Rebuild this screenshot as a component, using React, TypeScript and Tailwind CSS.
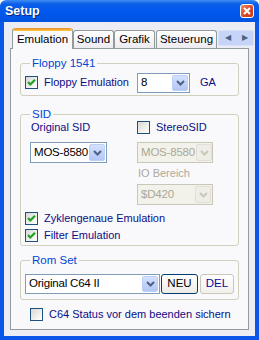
const font = "font-['Liberation_Sans',Arial,sans-serif]";

const Check = ({ checked }: { checked?: boolean }) => (
  <span className="w-[13px] h-[13px] shrink-0 border border-[#1c5180] bg-[linear-gradient(135deg,#d8d8d4_0%,#f4f4f2_70%,#ffffff_100%)] flex items-center justify-center">
    {checked && (
      <svg width="11" height="11" viewBox="0 0 11 11">
        <polyline points="2,5 4.3,7.5 9,2.8" stroke="#21a121" strokeWidth="2.2" fill="none" />
      </svg>
    )}
  </span>
);

const Chevron = ({ color }: { color: string }) => (
  <svg width="9" height="6" viewBox="0 0 9 6">
    <polyline points="1,1 4.5,4.5 8,1" stroke={color} strokeWidth="2" fill="none" />
  </svg>
);

const Combo = ({ value, className, disabled }: { value: string; className: string; disabled?: boolean }) => (
  <div
    className={`${className} flex shrink-0 border ${
      disabled ? "border-[#c9c7ba] bg-[#f2f1ea] text-[#aca899]" : "border-[#7f9db9] bg-white text-black"
    }`}
  >
    <span className="flex-1 flex items-center pl-[3px] text-[11.5px] leading-none whitespace-nowrap tracking-[-0.2px]">{value}</span>
    <span
      className={`w-[16px] m-[1px] rounded-[2px] flex items-center justify-center shrink-0 ${
        disabled ? "bg-[#eeede6] border border-[#e2e0d6]" : "bg-[linear-gradient(180deg,#d4e0fd,#b2c6f5)] border border-[#bccff8]"
      }`}
    >
      <Chevron color={disabled ? "#c9c7ba" : "#4d6185"} />
    </span>
  </div>
);

const Group = ({ title, className, children }: { title: string; className: string; children: React.ReactNode }) => (
  <fieldset className={`border border-[#d0d0bf] rounded-[3px] px-[4px] ${className}`}>
    <legend className="ml-[5px] px-[2px] text-[11.5px] leading-[13px] text-[#0046d5]">{title}</legend>
    {children}
  </fieldset>
);

const Tab = ({ label, w, active }: { label: string; w: string; active?: boolean }) =>
  active ? (
    <div className={`${w} h-[21px] -mb-[1px] relative z-10 shrink-0 rounded-t-[3px] border-x border-[#919b9c] bg-[#f9f9fc] flex flex-col`}>
      <div className="h-[3px] rounded-t-[3px] bg-[linear-gradient(180deg,#e68b2c,#ffc73c)]" />
      <div className="flex-1 flex items-center justify-center text-[11.5px] text-black pb-[1px]">{label}</div>
    </div>
  ) : (
    <div className={`${w} h-[18px] shrink-0 rounded-t-[3px] border border-b-0 border-[#919b9c] bg-[linear-gradient(180deg,#ffffff,#ecebf0)] flex items-center justify-center text-[11.5px] text-black`}>
      {label}
    </div>
  );

export default function App() {
  return (
    <div className={`w-[259px] h-[340px] flex flex-col overflow-hidden ${font} text-[11px] text-[#0c0c84]`}>
      <div className="h-[22px] shrink-0 flex items-center pl-[5px] pr-[5px] bg-[linear-gradient(180deg,#3f8cf3_0%,#0a5fe8_18%,#0058ee_55%,#0052e0_100%)] rounded-t-[6px]">
        <span className="text-white font-bold text-[12.5px] [text-shadow:1px_1px_#0a2a80]">Setup</span>
        <div className="ml-auto w-[14px] h-[14px] rounded-[3px] border border-white bg-[linear-gradient(135deg,#f08a6a,#d9461f_55%,#c23b16)] flex items-center justify-center">
          <svg width="8" height="8" viewBox="0 0 8 8">
            <path d="M1 1 L7 7 M7 1 L1 7" stroke="white" strokeWidth="2" />
          </svg>
        </div>
      </div>

      <div className="flex-1 flex flex-col bg-[#ececf5] border-x-4 border-b-4 border-[#0a56e8] px-[6px] pt-[6px] pb-[6px]">
        <div className="h-[20px] flex items-end pl-[2px]">
          <Tab label="Emulation" w="w-[61px]" active />
          <Tab label="Sound" w="w-[41px]" />
          <Tab label="Grafik" w="w-[41px]" />
          <Tab label="Steuerung" w="w-[61px] ml-[1px]" />
          <div className="self-start mt-[2px] ml-[1px] shrink-0 w-[36px] h-[16px] flex rounded-[2px] bg-[#c6d5f7] border border-[#d7e2fa]">
            <div className="flex-1 flex items-center justify-center text-[#4d6185] text-[8px]">◀</div>
            <div className="flex-1 flex items-center justify-center text-[#4d6185] text-[8px]">▶</div>
          </div>
        </div>

        <div className="flex-1 flex flex-col border border-[#919b9c] bg-[#f9f9fc] px-[9px] pt-[8px]">
          <Group title="Floppy 1541" className="pt-[2px] pb-[2px]">
            <div className="flex items-center h-[21px]">
              <div className="w-[112px] flex items-center gap-[6px]">
                <Check checked />
                <span className="whitespace-nowrap">Floppy Emulation</span>
              </div>
              <Combo value="8" className="w-[53px] h-[20px]" />
              <span className="ml-[10px]">GA</span>
            </div>
          </Group>

          <Group title="SID" className="mt-[12px] pb-[3px]">
            <div className="flex">
              <div className="w-[112px] pl-[5px] flex flex-col">
                <span className="leading-[13px] pl-[1px]">Original SID</span>
                <Combo value="MOS-8580" className="w-[77px] h-[21px] mt-[8px]" />
              </div>
              <div className="flex flex-col">
                <div className="flex items-center gap-[6px] h-[13px]">
                  <Check />
                  <span>StereoSID</span>
                </div>
                <Combo value="MOS-8580" className="w-[76px] h-[21px] mt-[8px]" disabled />
                <span className="leading-[13px] mt-[4px] pl-[1px] text-[#aca899]">IO Bereich</span>
                <Combo value="$D420" className="w-[76px] h-[21px] mt-[4px]" disabled />
              </div>
            </div>
            <div className="flex items-center gap-[6px] h-[13px] mt-[7px]">
              <Check checked />
              <span className="whitespace-nowrap">Zyklengenaue Emulation</span>
            </div>
            <div className="flex items-center gap-[6px] h-[13px] mt-[4px]">
              <Check checked />
              <span>Filter Emulation</span>
            </div>
          </Group>

          <Group title="Rom Set" className="mt-[8px] pt-[7px] pb-[5px]">
            <div className="flex items-center">
              <Combo value="Original C64 II" className="w-[135px] h-[20px]" />
              <button className="ml-[1px] w-[37px] h-[20px] rounded-[3px] border border-[#003c74] bg-[linear-gradient(180deg,#ffffff,#ecebe6)] text-black text-[11.5px] leading-none">
                NEU
              </button>
              <button className="ml-[2px] w-[34px] h-[20px] rounded-[3px] border border-[#c9c7ba] bg-[linear-gradient(180deg,#ffffff,#f0efea)] text-[#0c0c9a] text-[11.5px] leading-none">
                DEL
              </button>
            </div>
          </Group>

          <div className="flex items-center gap-[6px] h-[13px] mt-[8px] pl-[10px]">
            <Check />
            <span className="whitespace-nowrap">C64 Status vor dem beenden sichern</span>
          </div>
        </div>
      </div>
    </div>
  );
}
